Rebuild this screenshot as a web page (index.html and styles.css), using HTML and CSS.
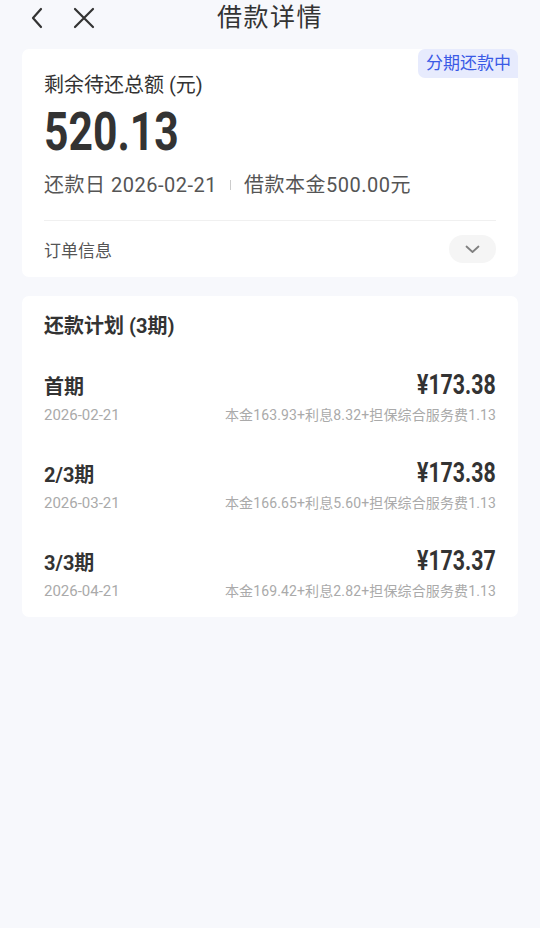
FILE: index.html
```html
<!DOCTYPE html>
<html lang="zh-CN">
<head>
<meta charset="utf-8">
<title>借款详情</title>
<link rel="stylesheet" href="styles.css">
</head>
<body>
<header class="nav">
  <div class="nav-left">
    <svg class="ic-back" width="16" height="22" viewBox="0 0 16 22"><path d="M12 2 L4 11 L12 20" fill="none" stroke="#333" stroke-width="2.2" stroke-linecap="round" stroke-linejoin="round"/></svg>
    <svg class="ic-close" width="22" height="22" viewBox="0 0 22 22"><path d="M2 2 L20 20 M20 2 L2 20" fill="none" stroke="#333" stroke-width="2.2" stroke-linecap="round"/></svg>
  </div>
  <h1 class="nav-title">借款详情</h1>
  <div class="nav-right"></div>
</header>

<section class="card summary">
  <span class="badge">分期还款中</span>
  <div class="label">剩余待还总额 (元)</div>
  <div class="amount"><span class="amount-num">520.13</span></div>
  <div class="sub"><span>还款日 2026-02-21</span><i class="sep"></i><span>借款本金500.00元</span></div>
  <div class="order">
    <span>订单信息</span>
    <span class="pill"><svg width="15" height="9" viewBox="0 0 15 9"><path d="M1.5 1.5 L7.5 7 L13.5 1.5" fill="none" stroke="#808080" stroke-width="1.8" stroke-linecap="round" stroke-linejoin="round"/></svg></span>
  </div>
</section>

<section class="card plan">
  <h2 class="plan-title">还款计划 (3期)</h2>
  <div class="row">
    <div class="row-top"><span class="term">首期</span><span class="money">¥173.38</span></div>
    <div class="row-bot"><span class="date">2026-02-21</span><span class="detail">本金163.93+利息8.32+担保综合服务费1.13</span></div>
  </div>
  <div class="row">
    <div class="row-top"><span class="term">2/3期</span><span class="money">¥173.38</span></div>
    <div class="row-bot"><span class="date">2026-03-21</span><span class="detail">本金166.65+利息5.60+担保综合服务费1.13</span></div>
  </div>
  <div class="row">
    <div class="row-top"><span class="term">3/3期</span><span class="money">¥173.37</span></div>
    <div class="row-bot"><span class="date">2026-04-21</span><span class="detail">本金169.42+利息2.82+担保综合服务费1.13</span></div>
  </div>
</section>
</body>
</html>
```

FILE: styles.css
```css
* { box-sizing: border-box; }
html, body { margin: 0; padding: 0; }
body {
  background: #f7f8fc;
  font-family: Roboto, "Noto Sans CJK SC", sans-serif;
  color: #333;
  width: 540px;
  min-height: 928px;
}
.nav {
  height: 36px;
  display: grid;
  grid-template-columns: 1fr auto 1fr;
  align-items: center;
}
.nav-left {
  display: flex;
  align-items: center;
  gap: 28px;
  padding-left: 29px;
}
.nav-title {
  margin: 0;
  font-size: 25px;
  font-weight: 400;
  line-height: 36px;
  color: #333;
  letter-spacing: 1.5px;
}
.card {
  background: #fff;
  border-radius: 7px;
  margin: 0 22px;
}
.summary {
  position: relative;
  margin-top: 13px;
  padding: 24px 22px 0;
}
.badge {
  position: absolute;
  top: 0;
  right: 0;
  height: 29px;
  padding: 0 7px 0 8px;
  background: #e7ebfd;
  color: #3a5ae6;
  font-size: 17px;
  line-height: 29px;
  border-radius: 7px 7px 0 7px;
}
.label {
  font-size: 20px;
  line-height: 24px;
  color: #333;
}
.amount {
  margin-top: 5px;
  font-size: 53px;
  font-weight: 700;
  line-height: 60px;
  color: #333;
}
.amount-num {
  display: inline-block;
  transform: scaleX(0.805);
  transform-origin: left center;
}
.sub {
  margin-top: 11px;
  display: flex;
  align-items: center;
  font-size: 20px;
  line-height: 24px;
  color: #555;
  letter-spacing: 0.5px;
}
.sep {
  display: block;
  width: 1px;
  height: 10px;
  background: #ccc;
  margin: 0 13px;
}
.order {
  margin-top: 23px;
  border-top: 1px solid #f0f0f0;
  height: 57px;
  display: flex;
  align-items: center;
  justify-content: space-between;
  font-size: 17px;
  color: #555;
}
.pill {
  width: 47px;
  height: 28px;
  border-radius: 14px;
  background: #f5f5f5;
  display: flex;
  align-items: center;
  justify-content: center;
}
.plan {
  margin-top: 19px;
  padding: 18px 22px 16px;
}
.plan-title {
  margin: 0;
  font-size: 20px;
  font-weight: 700;
  line-height: 24px;
  color: #333;
}
.row { padding-top: 31px; }
.row + .row { padding-top: 32px; }
.row-top {
  display: flex;
  justify-content: space-between;
  align-items: center;
  height: 32px;
}
.term {
  font-size: 20px;
  font-weight: 700;
  color: #333;
}
.money {
  display: inline-block;
  font-size: 27px;
  font-weight: 700;
  color: #333;
  transform: scaleX(0.79);
  transform-origin: right center;
}
.row-bot {
  margin-top: 4px;
  display: flex;
  justify-content: space-between;
  font-size: 14px;
  line-height: 20px;
  color: #aaa;
}
.date { font-size: 15px; }
.detail { letter-spacing: 0.13px; }
```
